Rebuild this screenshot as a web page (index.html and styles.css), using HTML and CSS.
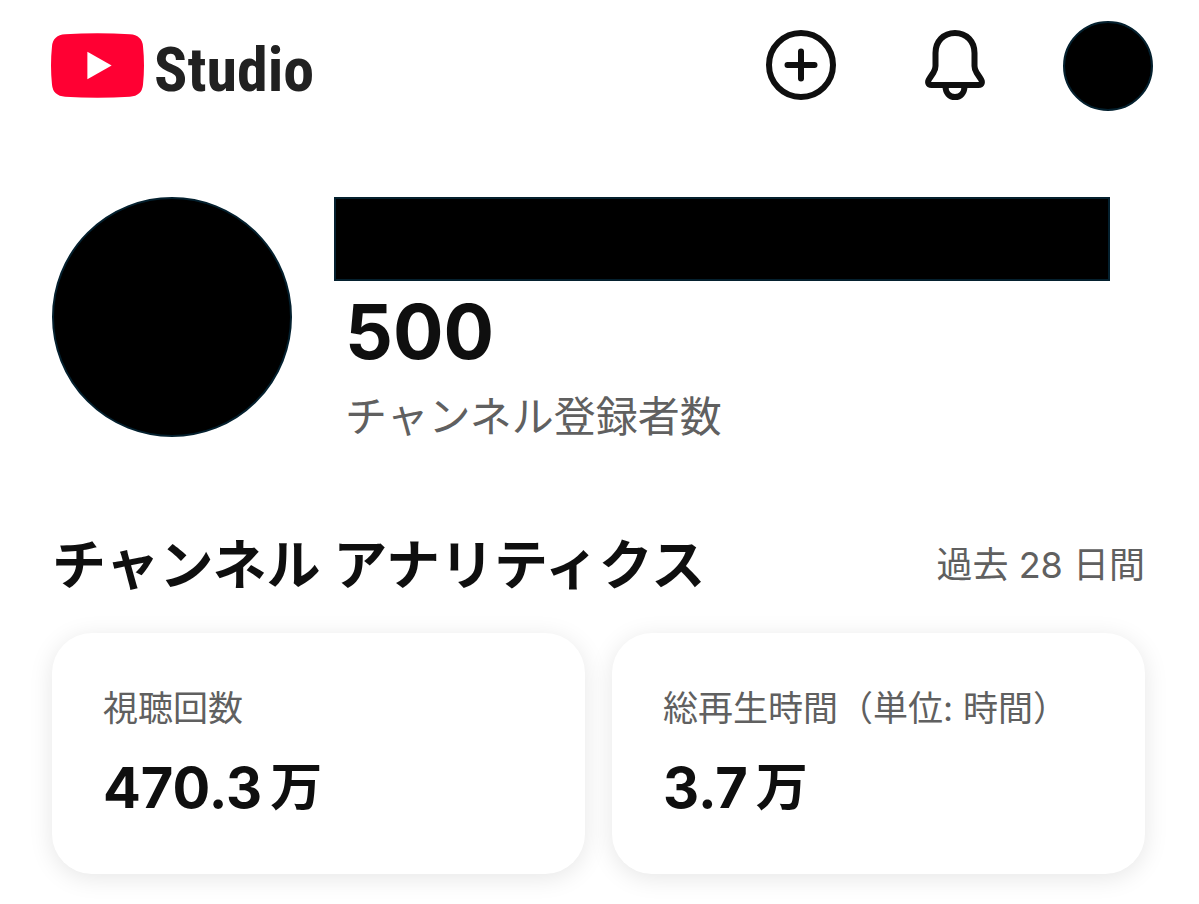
FILE: index.html
```html
<!DOCTYPE html>
<html lang="ja">
<head>
<meta charset="utf-8">
<meta name="viewport" content="width=device-width, initial-scale=1">
<title>Studio</title>
<link rel="stylesheet" href="styles.css">
</head>
<body>
<header class="topbar">
  <a class="brand" href="#">
    <svg class="brand-mark" viewBox="0 0 92 64" aria-hidden="true">
      <path fill="#ff0033" d="M14 1.200Q46-.800 78 1.200Q90 2 91 13Q93 32 91 51Q90 62 78 62.800Q46 64.800 14 62.800Q2 62 1 51Q-1 32 1 13Q2 2 14 1.200Z"/>
      <path fill="#fff" d="M36 18.500L60 32L36 45.500Z"/>
    </svg>
    <span class="brand-name">Studio</span>
  </a>
  <nav class="actions">
    <button class="icon-button" type="button" aria-label="作成">
      <svg viewBox="0 0 72 72" aria-hidden="true"><circle cx="36" cy="36" r="32"/><path d="M36 22.500v27M22.500 36h27"/></svg>
    </button>
    <button class="icon-button" type="button" aria-label="通知">
      <svg viewBox="0 0 72 72" aria-hidden="true"><path d="M36 4C24.500 4 16.500 12.500 16.500 24V37C16.500 39.500 16 41 14.500 43.500L10.500 49.500C8 53 9 56 12.500 56H59.500C63 56 64 53 61.500 49.500L57.500 43.500C56 41 55.500 39.500 55.500 37V24C55.500 12.500 47.500 4 36 4Z"/><path d="M26.500 57C26.500 64 30.500 68 36 68S45.500 64 45.500 57"/></svg>
    </button>
    <button class="account" type="button" aria-label="アカウント"></button>
  </nav>
</header>
<main>
  <section class="channel">
    <div class="avatar"></div>
    <div class="channel-info">
      <div class="channel-name"></div>
      <p class="count">500</p>
      <p class="count-label">チャンネル登録者数</p>
    </div>
  </section>
  <section class="analytics">
    <div class="analytics-head">
      <h1 class="title">チャンネル アナリティクス</h1>
      <span class="period">過去 28 日間</span>
    </div>
    <div class="cards">
      <article class="card">
        <h2 class="card-label">視聴回数</h2>
        <p class="card-value">470.3<span class="unit">万</span></p>
      </article>
      <article class="card">
        <h2 class="card-label">総再生時間（単位: 時間）</h2>
        <p class="card-value">3.7<span class="unit">万</span></p>
      </article>
    </div>
  </section>
</main>
</body>
</html>
```
FILE: styles.css
```css
* { box-sizing: border-box; }
body {
  margin: 0;
  background: #fff;
  color: #0f0f0f;
  font-family: Inter, "Noto Sans CJK JP", sans-serif;
}
p, h1, h2 { margin: 0; }
button { padding: 0; border: 0; background: none; }
.topbar {
  display: flex;
  align-items: center;
  justify-content: space-between;
  padding: 21px 46px 0 51px;
}
.brand {
  display: flex;
  align-items: center;
  gap: 10px;
  color: #212121;
  text-decoration: none;
}
.brand-mark { width: 93px; height: 65px; margin-bottom: 2px; }
.brand-name {
  padding-top: 8px;
  font-family: "Roboto Condensed", "Liberation Sans Narrow", sans-serif;
  font-weight: 700;
  font-size: 62px;
  line-height: 80px;
}
.actions { display: flex; align-items: center; gap: 82px; }
.icon-button { width: 72px; height: 72px; margin-bottom: 3px; }
.icon-button + .account { margin-left: -10px; }
.icon-button svg {
  display: block;
  fill: none;
  stroke: #0f0f0f;
  stroke-width: 6;
  stroke-linecap: round;
  stroke-linejoin: round;
}
.account, .avatar {
  border: 2px solid #04202e;
  border-radius: 50%;
  background: #000;
}
.account { width: 90px; height: 90px; }
.channel {
  display: flex;
  gap: 42px;
  padding: 86px 89px 0 52px;
}
.avatar { flex: none; width: 240px; height: 240px; }
.channel-info { flex: 1; }
.channel-name {
  height: 84px;
  border: 2px solid #04202e;
  background: #000;
}
.count {
  padding: 1px 0 0 11px;
  font-size: 75px;
  font-weight: 700;
  line-height: 100px;
}
.count-label {
  padding-left: 11px;
  color: #606060;
  font-size: 42px;
  line-height: 70px;
}
.analytics { padding: 74px 54px 28px 52px; }
.analytics-head {
  display: flex;
  align-items: flex-start;
  justify-content: space-between;
}
.title { font-size: 54px; font-weight: 700; line-height: 80px; }
.period { color: #606060; font-size: 36px; line-height: 78px; }
.cards {
  display: grid;
  grid-template-columns: 1fr 1fr;
  gap: 27px;
  margin-top: 27px;
}
.card {
  padding: 47px 51px 48px;
  border-radius: 40px;
  background: #fff;
  box-shadow: 0 4px 24px rgba(0, 0, 0, 0.1);
}
.card-label {
  color: #606060;
  font-size: 35px;
  font-weight: 400;
  line-height: 56px;
}
.card-value {
  display: flex;
  align-items: center;
  gap: 8px;
  margin-top: 14px;
  font-size: 56px;
  font-weight: 700;
  line-height: 76px;
}
.unit { font-size: 52px; }
```
